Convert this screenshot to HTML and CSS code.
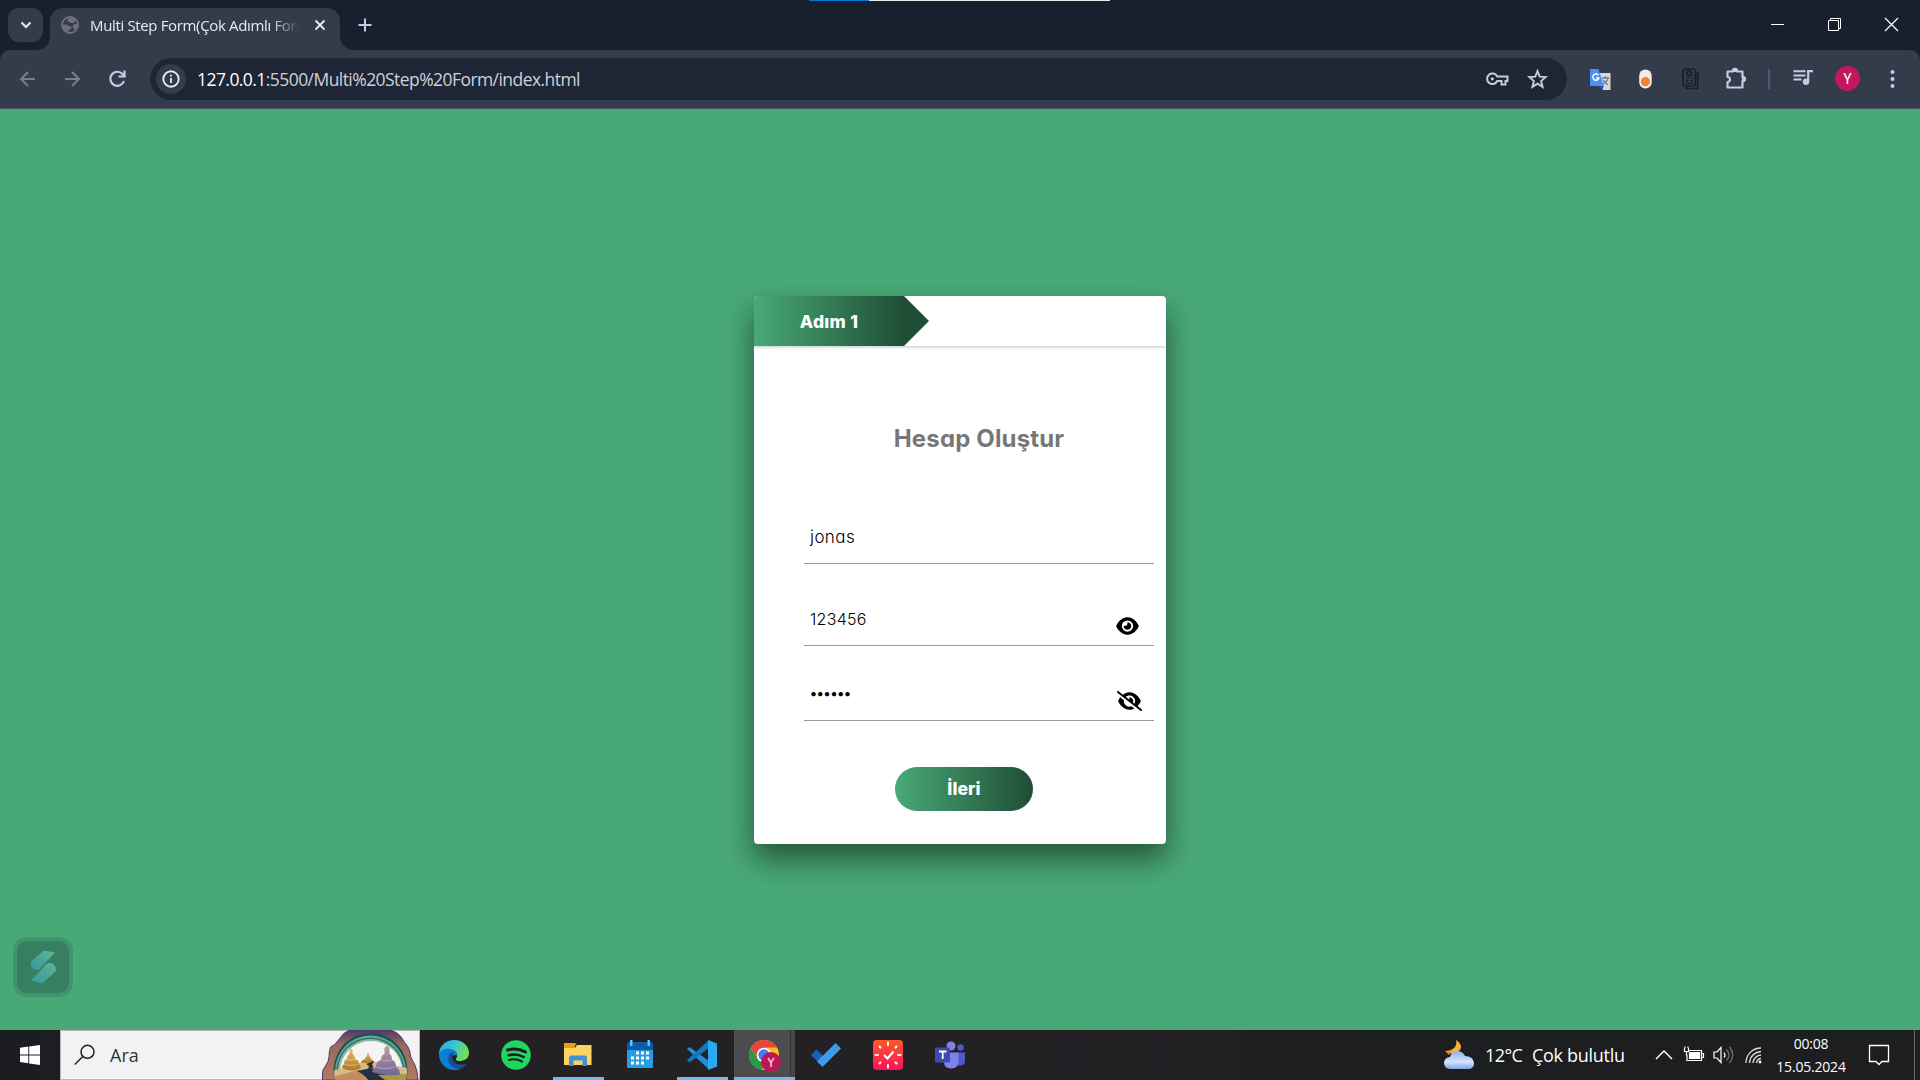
FILE: index.html
```html
<!DOCTYPE html>
<html lang="tr">
<head>
<meta charset="utf-8">
<title>Multi Step Form(Çok Adımlı Form)</title>
<link rel="stylesheet" href="styles.css">
</head>
<body>
<div class="screen">
  <header class="titlebar">
    <div class="capture"></div>
    <div class="tab-search"><svg width="12" height="12" viewBox="0 0 12 12" fill="none" stroke="#e6e9f2" stroke-width="2.2"><path d="M1.5 3.5 6 8l4.500-4.500"/></svg></div>
    <div class="tab">
      <svg class="favicon" width="18" height="18" viewBox="0 0 18 18"><circle cx="9" cy="9" r="8" fill="none" stroke="#6c7078" stroke-width="1.800"/><path d="M1.500 8.500h4q1.500 0 2 1.500h2q1 0 1 1.500T9 13.500H7.500v3.300L4 15.500 1.500 12zM8 1.200h3.500L14.500 3l1 1.500q-1.500 0-2 1.300-.5 1.200-2 1.200h-2L9 6H7.500q-1.500-.5-.8-2zM12 9q2-1.500 4.500-.5L15.500 13l-2.500.5q-.3-1-1-1.500z" fill="#6c7078"/></svg>
      <span class="tab-title">Multi Step Form(Çok Adımlı Form)</span>
      <svg class="tab-close" width="12" height="12" viewBox="0 0 12 12" stroke="#e6e9f2" stroke-width="1.900"><path d="m1.500 1.500 9 9m0-9-9 9"/></svg>
    </div>
    <svg class="new-tab" width="14" height="14" viewBox="0 0 14 14" stroke="#c4cbe0" stroke-width="2"><path d="M7 .5v13M.5 7h13"/></svg>
    <div class="window-buttons">
      <svg width="15" height="15" viewBox="0 0 15 15"><path d="M1 7.500h13" stroke="#fff"/></svg>
      <svg width="15" height="15" viewBox="0 0 15 15" fill="none" stroke="#fff"><path d="M1.500 3.500h10v10h-10zM3.500 3.500v-2h10v10h-2"/></svg>
      <svg width="15" height="15" viewBox="0 0 15 15" stroke="#fff" stroke-width="1.200"><path d="m1 1 13 13M14 1 1 14"/></svg>
    </div>
  </header>

  <nav class="toolbar">
    <svg width="24" height="24" viewBox="0 0 24 24" fill="none" stroke="#767e8d" stroke-width="2"><path d="M19 12H5m7-7-7 7 7 7"/></svg>
    <svg class="forward" width="24" height="24" viewBox="0 0 24 24" fill="none" stroke="#767e8d" stroke-width="2"><path d="M5 12h14m-7-7 7 7-7 7"/></svg>
    <svg class="reload" width="24" height="24" viewBox="0 0 24 24" fill="none" stroke="#c4cbe0" stroke-width="2.200"><path d="M18 14a7 7 0 1 1-1.500-7l2 2M18.500 3.500v6h-6"/></svg>
    <div class="omnibox">
      <div class="site-info"><svg width="18" height="18" viewBox="0 0 18 18"><circle cx="9" cy="9" r="7.700" fill="none" stroke="#e8eaf0" stroke-width="1.900"/><path d="M9 8v5M9 4.700v1.900" stroke="#e8eaf0" stroke-width="1.800"/></svg></div>
      <div class="url"><b>127.0.0.1</b>:5500/Multi%20Step%20Form/index.html</div>
      <svg class="key" width="24" height="24" viewBox="0 0 24 24" fill="none" stroke="#c9ccd4" stroke-width="2"><path d="M12.200 9.500H22.500v4.500H20.500v3.500h-4V14h-4.300a5.300 5.300 0 1 1 0-4.500z"/><circle cx="7.300" cy="11.800" r="1.600" fill="#c9ccd4" stroke="none"/></svg>
      <svg width="24" height="24" viewBox="0 0 24 24" fill="none" stroke="#c9ccd4" stroke-width="1.900"><path d="m11.500 4 2.200 5.600 6 .5-4.600 3.900 1.500 5.900-5.100-3.200-5.100 3.200L7.900 14l-4.600-3.900 6-.5z"/></svg>
    </div>
    <svg class="translate" width="24" height="24" viewBox="0 0 24 24"><path d="M11 6h11.500v17H15z" fill="#d7d9dc"/><path d="M14 11h7m-3.500-2v2m-3 6c3-1 5-3 5.500-6m-4.500 2 4 5" stroke="#6f7f8c" stroke-width="1.300" fill="none"/><path d="m11 19 3 4 2-4z" fill="#3b4bc8"/><path d="M2 2h8.500L16 19H3.500A1.500 1.500 0 0 1 2 17.500z" fill="#4e8df5"/><path d="M10.500 8.300A3.100 3.100 0 1 0 10.900 11H8" stroke="#fff" stroke-width="1.500" fill="none"/></svg>
    <svg class="capsule" width="24" height="24" viewBox="0 0 24 24"><rect x="5.200" y="2.500" width="12.500" height="19" rx="6.200" fill="#efeee8"/><circle cx="11.400" cy="14.700" r="4.600" fill="#f58033"/></svg>
    <svg class="doc" width="24" height="24" viewBox="0 0 24 24" fill="none" stroke="#1b1e26" stroke-width="1.700"><rect x="4" y="2" width="12.500" height="17" rx="2.500"/><path d="M18.700 5v16.500H7.500v-2"/><circle cx="10.300" cy="6.500" r="2.300"/><path d="M6.500 11.500h3.500m1.500 0h3M6.500 13.800h3m2 0h3M6.500 16.300h8" stroke-width="1.200"/></svg>
    <svg class="puzzle" width="24" height="24" viewBox="0 0 24 24" fill="none" stroke="#c4cbe0" stroke-width="2.200"><path d="M3.500 4.500H9a2 2 0 0 1 4 0h5.500v5.500a2 2 0 0 1 0 4v6.500h-15v-5.500a2.500 2.500 0 0 0 0-5z" stroke-linejoin="round"/><path d="M9 3.800a2 2 0 0 1 4 0zM19 10a2 2 0 0 1 0 4z" fill="#c4cbe0"/></svg>
    <div class="separator"></div>
    <svg class="music" width="24" height="24" viewBox="0 0 24 24"><path d="M2.500 4.200h12M2.500 8.400h12M2.500 12.600h8" stroke="#c4cbe0" stroke-width="2"/><circle cx="15" cy="14.800" r="3.200" fill="#c4cbe0"/><path d="M17.200 15V4.200H22" fill="none" stroke="#c4cbe0" stroke-width="2.200"/></svg>
    <div class="avatar">Y</div>
    <svg class="dots" width="24" height="24" viewBox="0 0 24 24" fill="#c4cbe0"><circle cx="12.500" cy="5" r="2"/><circle cx="12.500" cy="12" r="2"/><circle cx="12.500" cy="19" r="2"/></svg>
  </nav>

  <main class="page">
    <form class="card">
      <div class="steps"><div class="step">Adım 1</div><div class="arrow"></div></div>
      <h3 class="heading">Hesap Oluştur</h3>
      <div class="field name"><span>jonas</span></div>
      <div class="field pass"><span class="digits">123456</span>
        <svg width="23" height="20" viewBox="0 0 576 512"><path d="M288 32c-80.800 0-145.500 36.800-192.600 80.600C48.600 156 17.300 208 2.500 243.700c-3.300 7.900-3.300 16.700 0 24.600C17.300 304 48.600 356 95.400 399.400C142.500 443.200 207.200 480 288 480s145.500-36.800 192.600-80.600c46.800-43.500 78.100-95.400 93-131.100c3.300-7.900 3.300-16.700 0-24.600c-14.900-35.700-46.200-87.700-93-131.100C433.500 68.800 368.800 32 288 32zM144 256a144 144 0 1 1 288 0 144 144 0 1 1 -288 0zm144-64c0 35.300-28.700 64-64 64c-7.100 0-13.900-1.200-20.300-3.300c-5.500-1.800-11.900 1.600-11.700 7.400c.3 6.900 1.300 13.800 3.200 20.700c13.700 51.200 66.400 81.600 117.600 67.900s81.600-66.400 67.900-117.600c-11.100-41.500-47.800-69.400-88.600-71.100c-5.800-.2-9.200 6.100-7.400 11.700c2.100 6.400 3.300 13.200 3.300 20.300z"/></svg></div>
      <div class="field again"><span class="bullets">••••••</span>
        <svg width="25" height="20" viewBox="0 0 640 512"><path d="M38.800 5.100C28.400-3.100 13.300-1.200 5.100 9.200S-1.200 34.700 9.200 42.900l592 464c10.400 8.200 25.500 6.300 33.700-4.100s6.300-25.500-4.100-33.700L525.600 386.700c39.600-40.600 66.400-86.100 79.900-118.400c3.300-7.900 3.300-16.700 0-24.600c-14.900-35.700-46.200-87.700-93-131.100C465.500 68.800 400.800 32 320 32c-68.200 0-125 26.300-169.300 60.800L38.800 5.100zM223.100 149.500C248.600 126.200 282.700 112 320 112c79.500 0 144 64.500 144 144c0 24.900-6.300 48.300-17.400 68.700L408 294.500c8.400-19.300 10.600-41.400 4.800-63.300c-11.100-41.500-47.800-69.400-88.600-71.100c-5.800-.2-9.200 6.100-7.400 11.700c2.100 6.400 3.300 13.200 3.300 20.300c0 10.200-2.400 19.800-6.600 28.300l-90.300-70.800zM373 389.900c-16.400 6.500-34.300 10.100-53 10.100c-79.500 0-144-64.500-144-144c0-6.900 .5-13.600 1.400-20.200L83.100 161.500C60.300 191.200 44 220.800 34.500 243.700c-3.300 7.900-3.300 16.700 0 24.600c14.900 35.700 46.200 87.700 93 131.100C174.500 443.200 239.200 480 320 480c47.800 0 89.900-12.900 126.200-32.500L373 389.900z"/></svg></div>
      <button class="next" type="button">İleri</button>
    </form>
    <div class="widget">
      <svg width="52" height="52" viewBox="0 0 52 52"><defs><linearGradient id="wg" x1="0" y1="1" x2="1" y2="0"><stop offset="0" stop-color="#3597a4"/><stop offset="1" stop-color="#5fb693"/></linearGradient></defs><path d="M27 9.500 38 11.500 22.500 28q-3 2-6 0-4-3-2-8z" fill="url(#wg)"/><path d="M14 39.500 28.500 24q3-3 7-1.500 4.500 3 3 8L25 42.500z" fill="url(#wg)"/></svg>
    </div>
  </main>

  <footer class="taskbar">
    <div class="start"><svg width="20" height="20" viewBox="0 0 20 20" fill="#fff"><path d="M0 2.800 8.300 1.600v7.800H0zM9.200 1.500 20 0v9.400H9.200zM0 10.400h8.300v7.900L0 17.100zM9.200 10.400H20V20L9.200 18.500z"/></svg></div>
    <div class="search">
      <svg width="22" height="22" viewBox="0 0 22 22" fill="none" stroke="#222" stroke-width="1.500"><circle cx="13.500" cy="7.800" r="6.500"/><path d="M8.800 12.500.800 20.500"/></svg>
      <span class="search-text">Ara</span>
      <svg class="art" width="97" height="50" viewBox="0 0 97 50">
        <defs>
          <linearGradient id="rim" x1="0" y1="0" x2="0" y2="1"><stop offset="0" stop-color="#50366e"/><stop offset=".3" stop-color="#9b6a5c"/><stop offset="1" stop-color="#b07a62"/></linearGradient>
          <linearGradient id="gold" x1="0" y1="0" x2="0" y2="1"><stop offset="0" stop-color="#e6b870"/><stop offset="1" stop-color="#b07c1e"/></linearGradient>
          <linearGradient id="mauve" x1="0" y1="0" x2="0" y2="1"><stop offset="0" stop-color="#baa09c"/><stop offset="1" stop-color="#72649b"/></linearGradient>
          <clipPath id="opening"><ellipse cx="48.500" cy="41" rx="36.500" ry="38"/></clipPath>
        </defs>
        <path d="M.5 50V43q0-4 3-7 3-4 3.500-9 0-5 1.500-10 5-2 8-7 5-8 11-10h40q9 2 13 9 2 4 5 7 3 5 3 10 2 5 4 8 3 6 3.500 16z" fill="url(#rim)" stroke="#55396a"/>
        <ellipse cx="48.500" cy="41" rx="37" ry="38.500" fill="#1d5258"/>
        <ellipse cx="48.500" cy="41" rx="35.500" ry="35.500" fill="#6ba594"/>
        <ellipse cx="48.500" cy="41" rx="34" ry="33.500" fill="#2b7469"/>
        <ellipse cx="48.500" cy="41" rx="32.700" ry="32" fill="#86b9a0"/>
        <ellipse cx="49" cy="41" rx="31" ry="30" fill="#f4f4f4"/>
        <g clip-path="url(#opening)">
          <path d="M10 41 24 37l17-5 8-1 18 3 22 5v12H10z" fill="#d6b98c"/>
          <path d="M10 47 37 40 50 51H10z" fill="#c78b60"/>
          <path d="M35 41 49 38l20 5 20 3v6H47q-2-6-12-11z" fill="#252f42"/><path d="m56 45 33-1v8H66z" fill="#a69b45"/>
        </g>
        <path d="M27.500 20q1.500-3 3 0v4q2.500 1 2.500 5 4 1 4 5 2 1 2 4-9 5-19 0 0-3 2-4 0-4 3-5 0-4 2.500-5z" fill="url(#gold)"/>
        <path d="M45 24q1-3 2 0v2q2 1 2 3 3 1 3 4H39q0-3 4-4 0-2 2-3z" fill="url(#gold)"/>
        <path d="M62.500 18q2.500-4 5 0v6q2.500 1 2.500 6 4 1 4 7 4 2 4 7-14 3-28-2 1-4 4-5 0-6 5-7 0-5 3.500-6z" fill="url(#mauve)"/>
        <path d="M25 29q4 2 8 0M22 34q7 3 14 0M59.500 30q5 2 10 0M54.500 37q9 3 18 0" fill="none" stroke="#fff" stroke-opacity=".3" stroke-width="1.300"/>
        <path d="m44 34 8-3-2 4 2 2-6 2 1-3z" fill="#26313c"/>
      </svg>
    </div>
    <div class="apps">
      <div class="app"><svg width="30" height="30" viewBox="0 0 30 30"><defs><linearGradient id="e1" x1="0" y1="0" x2="1" y2=".4"><stop offset="0" stop-color="#2ba8e8"/><stop offset=".5" stop-color="#35c4d8"/><stop offset="1" stop-color="#70e052"/></linearGradient></defs><path d="M0 14C0 6 7 0 15 0c9 0 15 6 15 13 0 6-5 8-10 8-3 0-4-2-2-4 1-4-2-7-6-7-6 0-10 2-12 5z" fill="url(#e1)"/><path d="M0 14c2-5 7-6 12-5 4 1 6 4 6 7-2-2-6-1-6 3 0 5 5 9 9 10C10 33 0 25 0 14z" fill="#0d7ed8"/><path d="M10 15c-3 8 3 14 11 14 3-1 6-3 7-6-5 3-14 2-15-6 0-3 2-4 3-4-3-1-5 0-6 2z" fill="#124e91"/></svg></div>
      <div class="app"><svg width="30" height="30" viewBox="0 0 30 30"><circle cx="15" cy="15" r="14.800" fill="#1ed760"/><g fill="none" stroke="#1c1c1c" stroke-linecap="round"><path d="M6.500 10Q16 7.300 24.500 12" stroke-width="3"/><path d="M7.500 15.200Q15.500 13 22.700 17" stroke-width="2.500"/><path d="M8 20Q15 18.200 21 21.500" stroke-width="2"/></g></svg></div>
      <div class="app running"><svg width="30" height="30" viewBox="0 0 30 30"><path d="M1 3h11l2 2h-2v4H1z" fill="#e4a00f"/><path d="M1 8h11l2-3h14.500v20H1z" fill="#fdd363"/><path d="M6 26V18q0-2.500 2.500-2.500h13Q24 15.500 24 18v8h-4.500v-5.500h-9V26z" fill="#4092d2"/></svg></div>
      <div class="app"><svg width="30" height="30" viewBox="0 0 30 30"><path d="M2 9h26v17.500q0 1.500-1.500 1.500h-23Q2 28 2 26.500z" fill="#269ee4"/><path d="M2 3.500Q2 2 3.500 2h23Q28 2 28 3.500V10H2z" fill="#0c5aa8"/><path d="M5 0h2.500v6H5zM22.500 0H25v6h-2.500z" fill="#4ccdf5"/><path d="M11 11.500h3v3h-3zm5 0h3v3h-3zm5 0h3v3h-3zm-15 5h3v3H6zm5 0h3v3h-3zm5 0h3v3h-3zm5 0h3v3h-3zm-15 5h3v3H6zm5 0h3v3h-3zm5 0h3v3h-3z" fill="#fff"/></svg></div>
      <div class="app running"><svg width="30" height="30" viewBox="0 0 30 30"><path d="M0 9 2.500 7 22 21v8.500z" fill="#1e8fd8"/><path d="m0 20 2.500 2.500L22 8V0z" fill="#0f78bd"/><path d="M21 0 30 3.500v23L21 30z" fill="#2aa8f2"/></svg></div>
      <div class="app active"><svg width="34" height="34" viewBox="0 0 34 34"><circle cx="16" cy="17" r="15" fill="#fbc116"/><path d="M3 9.500A15 15 0 0 1 29 9.500H16L9.500 21z" fill="#e8453c"/><path d="M3 9.500 9.500 21l6.500 3.500L14 32A15 15 0 0 1 3 9.500z" fill="#2b9a48"/><circle cx="16" cy="17" r="7.300" fill="#fff"/><circle cx="16" cy="17" r="5.700" fill="#3c82ee"/><circle cx="23" cy="24" r="10" fill="#bd1758"/><path d="m20 20 3 4.500 3-4.500M23 24.500V29" fill="none" stroke="#efc0d3" stroke-width="1.700"/></svg></div>
      <div class="app"><svg width="30" height="30" viewBox="0 0 30 30"><path d="m0 15 5.500-5.500L17 21l-5.500 5.500z" fill="#1b5cbd"/><path d="M6 21.500 24.500 3 30 8.500 11.500 27z" fill="#3d9be9"/></svg></div>
      <div class="app"><svg width="30" height="30" viewBox="0 0 30 30"><defs><linearGradient id="al" x1="0" y1="0" x2="0" y2="1"><stop offset="0" stop-color="#ff5a2a"/><stop offset="1" stop-color="#ff1058"/></linearGradient></defs><rect width="30" height="30" rx="4" fill="url(#al)"/><path d="m11 15 3.500 3.500 6-7" fill="none" stroke="#fff" stroke-width="2"/><path d="M15 2.500V5M15 25v2.500M2.500 15H5M25 15h2.500M6.500 6.500l1 1M23.500 6.500l-1 1M6.500 23.500l1-1M23.500 23.500l-1-1" stroke="#fff" stroke-width="2" stroke-linecap="round"/></svg></div>
      <div class="app"><svg width="30" height="30" viewBox="0 0 30 30"><circle cx="16" cy="6" r="4.500" fill="#7b83eb"/><circle cx="25.500" cy="7.500" r="3.200" fill="#5059c9"/><path d="M20 12.500h10v9q0 4-5 4h-5z" fill="#5059c9"/><path d="M9 12.500h14.500v8q0 8-7.500 8-7 0-7-7z" fill="#7b83eb"/><rect y="7.500" width="15" height="15" rx="1.500" fill="#4149ae"/><path d="M4 11.500h7.500M7.700 11.500V19" stroke="#fff" stroke-width="1.800"/></svg></div>
    </div>
    <div class="tray">
      <svg width="32" height="32" viewBox="0 0 32 32"><defs><linearGradient id="cl" x1="0" y1="0" x2="0" y2="1"><stop offset="0" stop-color="#8fb4ee"/><stop offset=".6" stop-color="#d5e4fa"/><stop offset="1" stop-color="#7fa6ea"/></linearGradient></defs><path d="M13 1c5 3 6 7 4 10s-8 6-15 1c7 0 13-4 11-11z" fill="#f3b33a"/><path d="M2 12c3 1 5 0 7-1l-3 5z" fill="#e98728"/><path d="M7 30a6 6 0 0 1 0-12 8 8 0 0 1 15-1q8 0 9 7 0 6-6 6z" fill="url(#cl)"/></svg>
      <span class="weather">12°C</span><span class="cloudy">Çok bulutlu</span>
      <svg class="chev" width="18" height="12" viewBox="0 0 18 12" fill="none" stroke="#fff" stroke-width="1.500"><path d="m1 10 8-8 8 8"/></svg>
      <svg class="battery" width="22" height="18" viewBox="0 0 22 18" fill="none" stroke="#fff" stroke-width="1.200"><path d="M6 4.500h12.500v10H4V9M19 7.500h1.500v4H19M1.500 2v3.500h4V2M2 2V.5M5 2V.5M3.500 6v3.500"/><path d="M6.500 6.500h10v6h-10z" fill="#fff"/></svg>
      <svg class="speaker" width="22" height="18" viewBox="0 0 22 18" fill="none" stroke="#fff" stroke-width="1.200"><path d="M1 6h3l4-4.500v15L4 12H1z"/><path d="M11 6.500q2 2.500 0 5"/><path d="M13.500 3.500q5 5.500 0 11M16.500 1q6.500 8 0 16" stroke="#777"/></svg>
      <svg class="wifi" width="18" height="18" viewBox="0 0 18 18" fill="none" stroke="#ddd" stroke-width="1.300"><path d="M1 17C1 8 8 2 16 2M4.500 17C5 10 10 6 16 5.500M8 17c0-4 4-8 8-8M11.500 17q1-4.500 4.500-4.500"/><circle cx="15" cy="16" r="1.400" fill="#fff" stroke="none"/></svg>
      <div class="clock"><div class="time">00:08</div><div>15.05.2024</div></div>
      <svg class="notice" width="22" height="22" viewBox="0 0 22 22" fill="none" stroke="#fff" stroke-width="1.300"><path d="M1.500 1.500h19v16h-6.500l-3 3-3-3H1.500z"/></svg>
      <div class="desktop-edge"></div>
    </div>
  </footer>
</div>
</body>
</html>
```
FILE: styles.css
```css
* { box-sizing: border-box; }
body { margin: 0; }
svg { display: block; flex: none; }
.screen {
  display: flex; flex-direction: column;
  width: 1920px; height: 1080px; overflow: hidden;
  font-family: "Open Sans", "Noto Sans", sans-serif;
}

/* browser window */
.titlebar { position: relative; z-index: 1; display: flex; height: 50px; padding: 8px 0 0 8px; background: #182030; }
.capture { position: absolute; top: 0; left: 809px; width: 301px; height: 1px; background: linear-gradient(90deg, #0078d7 60px, #e4ece8 60px); }
.tab-search { display: grid; place-items: center; width: 35px; height: 34px; border-radius: 11px; background: #343c4c; }
.tab {
  position: relative; display: flex; align-items: center;
  width: 290px; height: 42px; margin-left: 7px; padding: 0 14px 8px 11px;
  border-radius: 13px 13px 0 0; background: #343c4c;
}
.tab::before, .tab::after { content: ""; position: absolute; bottom: 0; width: 13px; height: 13px; }
.tab::before { left: -13px; background: radial-gradient(circle at 0 0, transparent 12.5px, #343c4c 13px); }
.tab::after { right: -13px; background: radial-gradient(circle at 100% 0, transparent 12.5px, #343c4c 13px); }
.tab-title {
  width: 208px; margin-left: 11px; overflow: hidden; white-space: nowrap;
  font-size: 15px; letter-spacing: -0.35px; color: #e8eaf0;
  -webkit-mask-image: linear-gradient(90deg, #000 180px, transparent 210px);
}
.tab-close { margin-left: auto; }
.new-tab { margin: 10px 0 0 18px; }
.window-buttons { display: flex; gap: 42px; margin: 9px 21px 0 auto; }

.toolbar {
  display: flex; align-items: center; height: 59px; padding: 0 0 1px 16px;
  background: #343c4c; border-bottom: 1px solid #4b5564;
  border-radius: 10px 10px 0 0; box-shadow: 0 -10px 0 #182030;
}
.forward { margin-left: 20px; }
.reload { margin-left: 22px; }
.omnibox {
  display: flex; align-items: center; width: 1417px; height: 42px;
  margin-left: 20px; padding: 0 17px 0 6px; border-radius: 21px; background: #1e2636;
}
.site-info { display: grid; place-items: center; width: 30px; height: 30px; border-radius: 50%; background: #343c4c; }
.url { margin-left: 11px; font-size: 17.5px; letter-spacing: -0.56px; color: #ced1d8; white-space: nowrap; }
.url b { font-weight: 400; color: #fff; }
.key { margin: 0 17px 0 auto; }
.translate, .doc, .puzzle, .music { margin-left: 21px; }
.capsule { margin-left: 22px; }
.separator { width: 2px; height: 20px; margin-left: 20px; background: #505a6e; }
.avatar {
  display: grid; place-items: center; width: 25px; height: 25px; margin-left: 20px;
  border-radius: 50%; background: #c2185b; color: #fff; font: 14px/1 Roboto, sans-serif;
}
.dots { margin-left: 20px; }

/* web page */
.page {
  position: relative; display: flex; justify-content: center; align-items: flex-start;
  height: 921px; padding-top: 187px; background: #49a976;
  font-family: Inter, "Open Sans", sans-serif; font-feature-settings: "cv11";
}
.card {
  display: flex; flex-direction: column; width: 412px; height: 548px;
  border-radius: 4px; background: #fff; overflow: hidden;
  box-shadow: 0 15px 30px rgba(0, 0, 0, 0.5);
}
.steps { display: flex; flex: none; height: 50px; box-shadow: 0 1px 3px rgba(31, 78, 54, 0.3); }
.step {
  display: grid; place-items: center; width: 150px;
  background: linear-gradient(90deg, #49a976, #1f4e36);
  color: #fff; font-size: 17.5px; font-weight: 800; letter-spacing: 0.3px;
}
.arrow { width: 25px; background: #1f4e36; clip-path: polygon(0 0, 100% 50%, 0 100%); }
.heading { flex: none; width: 350px; margin: 77px 0 0 50px; color: #777; text-align: center; font-size: 24px; line-height: 32px; font-weight: 700; letter-spacing: 0.15px; }
.field {
  display: flex; flex: none; justify-content: space-between; width: 350px; margin-left: 50px;
  padding: 0 15px 0 6px; border-bottom: 1px solid #999;
  font-size: 17px; font-weight: 300; line-height: 24px; letter-spacing: 0.4px; color: #000;
}
.name { height: 39px; margin-top: 70px; }
.pass { height: 44px; margin-top: 38px; padding-top: 5px; }
.again { height: 45px; margin-top: 30px; padding-top: 5px; padding-right: 12px; }
.field svg { margin-top: 10px; }
.pass svg { margin-top: 9px; }
.digits { font-size: 16px; letter-spacing: 0.3px; }
.bullets { margin-left: -1px; font-size: 16px; letter-spacing: -2.2px; }
.next {
  flex: none; width: 138px; height: 44px; margin: 46px 0 0 141px; padding: 0 0 2px; border: 0; border-radius: 22px;
  background: linear-gradient(90deg, #49a976, #1f4e36);
  color: #fff; font-family: inherit; font-size: 17.5px; font-weight: 800; letter-spacing: 0.1px;
}
.widget {
  position: absolute; left: 13px; bottom: 33px; width: 60px; height: 60px;
  border: 4px solid #41956d; border-radius: 14px; background: #387f61;
}

/* taskbar */
.taskbar { display: flex; height: 50px; background: linear-gradient(90deg, #1c1d21, #242125 450px, #242125 1000px, #1d1e20 1400px); color: #fff; }
.start { display: grid; place-items: center; width: 60px; }
.search { display: flex; align-items: center; width: 360px; padding-left: 13px; border: 1px solid #b8b8b8; background: #f2f2f2; }
.search-text { margin-left: 14px; font-size: 18px; color: #333; }
.art { margin-left: auto; }
.apps { display: flex; margin-left: 3px; }
.app { display: grid; place-items: center; width: 62px; height: 50px; }
.running { background: linear-gradient(#76b9ed, #76b9ed) 6px 100% / 51px 3px no-repeat; }
.active { width: 61px; margin: 0 0 0 1px; background: linear-gradient(#76b9ed, #76b9ed) bottom / 100% 3px no-repeat, linear-gradient(90deg, #4c4b4e 56px, #343336 56px, #343336 57px, #464548 57px); }
.tray { display: flex; align-items: center; margin-left: auto; font-size: 18px; white-space: nowrap; }
.weather { width: 47px; margin-left: 10px; letter-spacing: -0.6px; }
.cloudy { width: 90px; letter-spacing: -0.3px; }
.chev { margin-left: 33px; }
.battery { margin-left: 10px; }
.speaker { margin-left: 8px; }
.wifi { margin-left: 10px; }
.clock { width: 84px; margin-left: 6px; text-align: center; font-size: 14px; line-height: 23px; letter-spacing: -0.2px; }
.notice { margin-left: 15px; }
.desktop-edge { width: 1px; height: 50px; margin: 0 5px 0 24px; background: #6b6b6d; }
```
